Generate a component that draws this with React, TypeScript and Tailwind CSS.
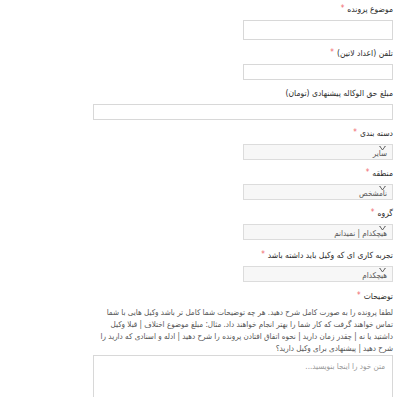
import React from 'react';

type Field = {
  label: string;
  required?: boolean;
  kind: 'input' | 'select';
  wide?: boolean;
  tall?: boolean;
  value?: string;
  gap?: string;
};

const fields: Field[] = [
  { label: 'موضوع پرونده', required: true, kind: 'input', tall: true, gap: 'mb-[7px]' },
  { label: 'تلفن (اعداد لاتین)', required: true, kind: 'input', gap: 'mb-[7px]' },
  { label: 'مبلغ حق الوکاله پیشنهادی (تومان)', kind: 'input', wide: true, gap: 'mb-[7px]' },
  { label: 'دسته بندی', required: true, kind: 'select', value: 'سایر', gap: 'mb-[7px]' },
  { label: 'منطقه', required: true, kind: 'select', value: 'نامشخص', gap: 'mb-[7px]' },
  { label: 'گروه', required: true, kind: 'select', value: 'هیچکدام | نمیدانم', gap: 'mb-[9px]' },
  { label: 'تجربه کاری ای که وکیل باید داشته باشد', required: true, kind: 'select', value: 'هیچکدام', gap: 'mb-[8px]' },
];

function Label({ text, required }: { text: string; required?: boolean }) {
  return (
    <div className="mb-[5px] h-[12px] text-[8.5px] leading-[12px] text-[#2e2e2e]">
      {text}
      {required && <span className="mr-[3px] align-top text-[8px] text-[#f0666b]">*</span>}
    </div>
  );
}

function Chevron() {
  return (
    <svg width="7" height="5" viewBox="0 0 7 5" className="absolute right-[6px] top-[1px]">
      <path d="M0.5 0.5 L1.5 0.5 M5.5 0.5 L6.5 0.5 M1 0.5 L3.5 4 L6 0.5" stroke="#555" strokeWidth="0.9" fill="none" />
    </svg>
  );
}

export default function App() {
  return (
    <div
      className="h-[397px] overflow-hidden bg-white"
      style={{ fontFamily: '"DejaVu Sans Condensed", "DejaVu Sans", sans-serif' }}
    >
      <div dir="rtl" className="ml-auto mr-[24px] w-[300px] pt-[3px]">
        {fields.map((f) => (
          <div key={f.label} className={f.gap}>
            <Label text={f.label} required={f.required} />
            {f.kind === 'input' ? (
              <div
                className={`${f.wide ? 'w-[300px]' : 'w-[150px]'} ${
                  f.tall ? 'h-[20px]' : 'h-[16px]'
                } border border-[#d8d8d8] bg-white`}
              />
            ) : (
              <div className="relative h-[16px] w-[150px] border border-[#dcdcdc] bg-[#f7f7f7]">
                <Chevron />
                <div className="absolute bottom-[0px] right-[5px] text-[8px] leading-[11px] text-[#555]">
                  {f.value}
                </div>
              </div>
            )}
          </div>
        ))}
        <div>
          <Label text="توضیحات" required />
          <p className="pl-[6px] text-[8px] leading-[12px] text-[#555]">
            لطفا پرونده را به صورت کامل شرح دهید. هر چه توضیحات شما کامل تر باشد وکیل هایی با شما تماس خواهند گرفت که کار شما را بهتر انجام خواهند داد. مثال: مبلغ موضوع اختلاف | قبلا وکیل داشتید یا نه | چقدر زمان دارید | نحوه اتفاق افتادن پرونده را شرح دهید | ادله و اسنادی که دارید را شرح دهید | پیشنهادی برای وکیل دارید؟
          </p>
          <textarea
            placeholder="متن خود را اینجا بنویسید..."
            className="block h-[80px] w-[300px] resize-none border border-[#d8d8d8] bg-white px-[7px] py-[5px] text-[8px] leading-[12px] text-[#555] placeholder:text-[#999] outline-none"
          />
        </div>
      </div>
    </div>
  );
}
